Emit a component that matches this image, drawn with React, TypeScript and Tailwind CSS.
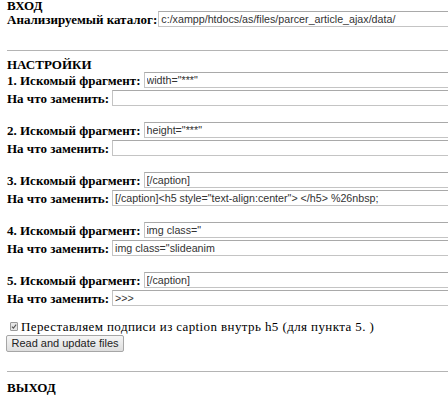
import React from "react";

type Pair = { find: string; replace: string };

const pairs: Pair[] = [
  { find: 'width="***"', replace: "" },
  { find: 'height="***"', replace: "" },
  { find: "[/caption]", replace: '[/caption]<h5 style="text-align:center"> </h5> %26nbsp;' },
  { find: 'img class="', replace: 'img class="slideanim' },
  { find: "[/caption]", replace: ">>>" },
];

function Field({ label, value, gap = "ml-[3px]" }: { label: string; value: string; gap?: string }) {
  return (
    <div className="flex h-[18px] items-center">
      <span className="whitespace-nowrap font-bold">{label}</span>
      <input
        readOnly
        value={value}
        className={`${gap} h-[16px] flex-1 border border-[#c4c4c4] border-t-[#a9a9a9] bg-white px-[2px] font-['Liberation_Sans',Arial,sans-serif] text-[10.7px] text-[#333] outline-none`}
      />
    </div>
  );
}

export default function App() {
  return (
    <div className="h-[400px] w-[448px] overflow-hidden bg-white font-['Liberation_Serif','Times_New_Roman',serif] text-[13px] leading-none text-black">
      <div className="-mt-[1px] w-[480px] pl-[7px]">
        <h3 className="h-[11px] font-bold">ВХОД</h3>
        <Field label="Анализируемый каталог:" value="c:/xampp/htdocs/as/files/parcer_article_ajax/data/" gap="ml-[1px]" />

        <hr className="mt-[22px] border-t border-[#b4b4b4]" />

        <h3 className="mt-[7px] h-[12px] font-bold">НАСТРОЙКИ</h3>
        <div className="mt-[1px] flex flex-col gap-[14px]">
          {pairs.map((p, i) => (
            <div key={i}>
              <Field label={`${i + 1}. Искомый фрагмент:`} value={p.find} />
              <Field label="На что заменить:" value={p.replace} />
            </div>
          ))}
        </div>

        <div className="mt-[12px] flex h-[14px] items-center">
          <span className="ml-[3px] mr-[3px] flex h-[9px] w-[8px] items-center justify-center rounded-[1px] border border-[#9a9a9a] bg-[#e6e6e6]">
            <svg viewBox="0 0 10 10" className="h-[7px] w-[7px]">
              <path d="M1.5 5.2 L4 7.8 L8.6 2" fill="none" stroke="#555" strokeWidth="1.8" />
            </svg>
          </span>
          <span className="whitespace-nowrap tracking-[0.4px]">Переставляем подписи из caption внутрь h5 (для пункта 5. )</span>
        </div>
        <button className="mt-[2px] h-[17px] w-[118px] -ml-[1px] rounded-[2px] border border-[#a6a6a6] bg-gradient-to-b from-[#f6f6f6] to-[#dedede] font-['Liberation_Sans',Arial,sans-serif] text-[11px] text-[#222]">
          Read and update files
        </button>

        <hr className="mt-[19px] border-t border-[#b4b4b4]" />
        <h3 className="mt-[9px] font-bold">ВЫХОД</h3>
      </div>
    </div>
  );
}
